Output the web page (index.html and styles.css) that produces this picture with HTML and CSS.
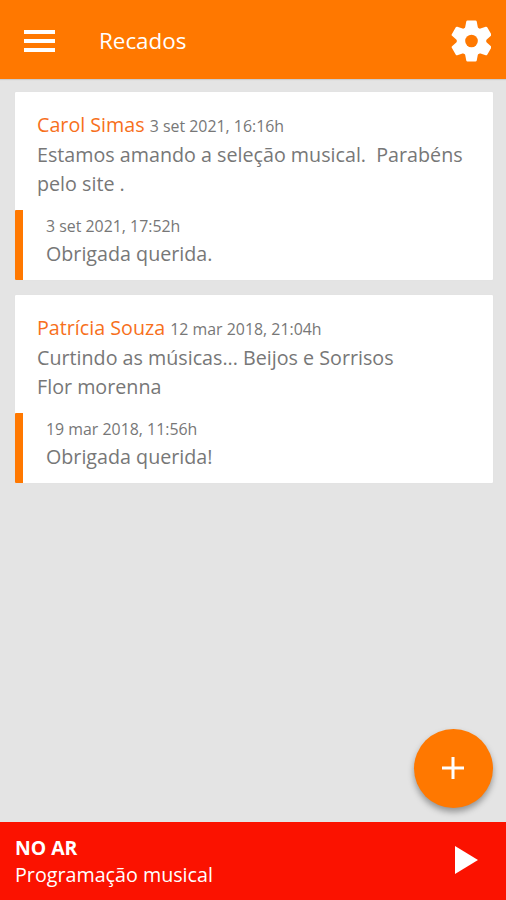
FILE: index.html
```html
<!DOCTYPE html>
<html lang="pt-BR">
<head>
<meta charset="utf-8">
<title>Recados</title>
<link rel="stylesheet" href="styles.css">
</head>
<body>
<header class="bar">
  <svg class="menu" viewBox="0 0 31 22"><path d="M0 0h31v4H0zM0 9h31v4H0zM0 18h31v4H0z"/></svg>
  <h1>Recados</h1>
  <svg class="gear" viewBox="-20.500 -21 40 42">
    <defs><path id="teeth" d="M-4-19.200h8L5.200-13v26l-1.200 6.200h-8l-1.200-6.200v-26z"/></defs>
    <circle r="14.800"/>
    <g class="teeth"><use href="#teeth"/><use href="#teeth" transform="rotate(60)"/><use href="#teeth" transform="rotate(120)"/></g>
    <circle class="hole" r="6.300"/>
  </svg>
</header>
<main class="list">
  <article class="card">
    <div class="message">
      <p class="heading"><span class="author">Carol Simas</span> <time>3 set 2021, 16:16h</time></p>
      <p class="line">Estamos amando a seleção musical.&nbsp; Parabéns<br>pelo site .</p>
    </div>
    <div class="reply">
      <time>3 set 2021, 17:52h</time>
      <p>Obrigada querida.</p>
    </div>
  </article>
  <article class="card">
    <div class="message">
      <p class="heading"><span class="author">Patrícia Souza</span> <time>12 mar 2018, 21:04h</time></p>
      <p class="line">Curtindo as músicas... Beijos e Sorrisos<br>Flor morenna</p>
    </div>
    <div class="reply">
      <time>19 mar 2018, 11:56h</time>
      <p>Obrigada querida!</p>
    </div>
  </article>
</main>
<button class="fab" aria-label="Adicionar"><svg viewBox="0 0 22 22"><path d="M9.500 0h3v9.500H22v3h-9.500V22h-3v-9.500H0v-3h9.500z"/></svg></button>
<footer class="player">
  <div class="track"><strong>NO AR</strong><span>Programação musical</span></div>
  <svg class="play" viewBox="0 0 23 28"><path d="M0 0l23 14L0 28z"/></svg>
</footer>
</body>
</html>
```
FILE: styles.css
```css
* { box-sizing: border-box; }
body { margin: 0; height: 900px; display: flex; flex-direction: column; overflow: hidden; background: #e4e4e4; color: #777; font-family: "Open Sans", sans-serif; font-size: 19.700px; }
p, h1 { margin: 0; }
svg { display: block; fill: #fff; }
.bar { height: 79px; flex: none; display: flex; align-items: center; padding: 3px 15px 0 24px; background: #ff7800; color: #fff; box-shadow: 0 1px 1px rgba(0,0,0,.1); }
.menu { width: 31px; height: 22px; }
.bar h1 { margin: -2px 0 0 44px; flex: 1; font-size: 22.400px; font-weight: 400; }
.gear { width: 40px; height: 42px; }
.teeth { stroke: #fff; stroke-width: 2.500px; stroke-linejoin: round; }
.hole { fill: #ff7800; }
.list { flex: 1; padding: 13px 13px 0 15px; display: flex; flex-direction: column; gap: 14.500px; }
.card { height: 188px; background: #fff; border-radius: 1px; box-shadow: 0 0 1px rgba(0,0,0,.06); }
.message { height: 118px; padding: 18px 22px 0; }
.heading { height: 30px; line-height: 29px; white-space: nowrap; }
.line { line-height: 29px; white-space: nowrap; }
.author { color: #f7701c; }
time { font-size: 15.900px; }
.reply { height: 70px; border-left: 8px solid #ff7800; border-radius: 1px; padding: 2px 23px 0; }
.reply time { display: block; line-height: 28px; }
.reply p { line-height: 28.500px; }
.fab { position: absolute; left: 414px; top: 729px; width: 79px; height: 79px; padding: 0 1px 1px 0; border: 0; border-radius: 50%; background: #ff7800; display: flex; align-items: center; justify-content: center; box-shadow: 0 4px 6px rgba(0,0,0,.35); }
.fab svg { width: 22px; height: 22px; }
.player { height: 78px; flex: none; display: flex; align-items: center; justify-content: space-between; padding: 0 28px 0 15px; background: #fb1200; color: #fff; }
.track { display: flex; flex-direction: column; line-height: 27px; }
.track strong { font-size: 19.400px; }
.play { width: 23px; height: 28px; margin-top: -2px; }
```
